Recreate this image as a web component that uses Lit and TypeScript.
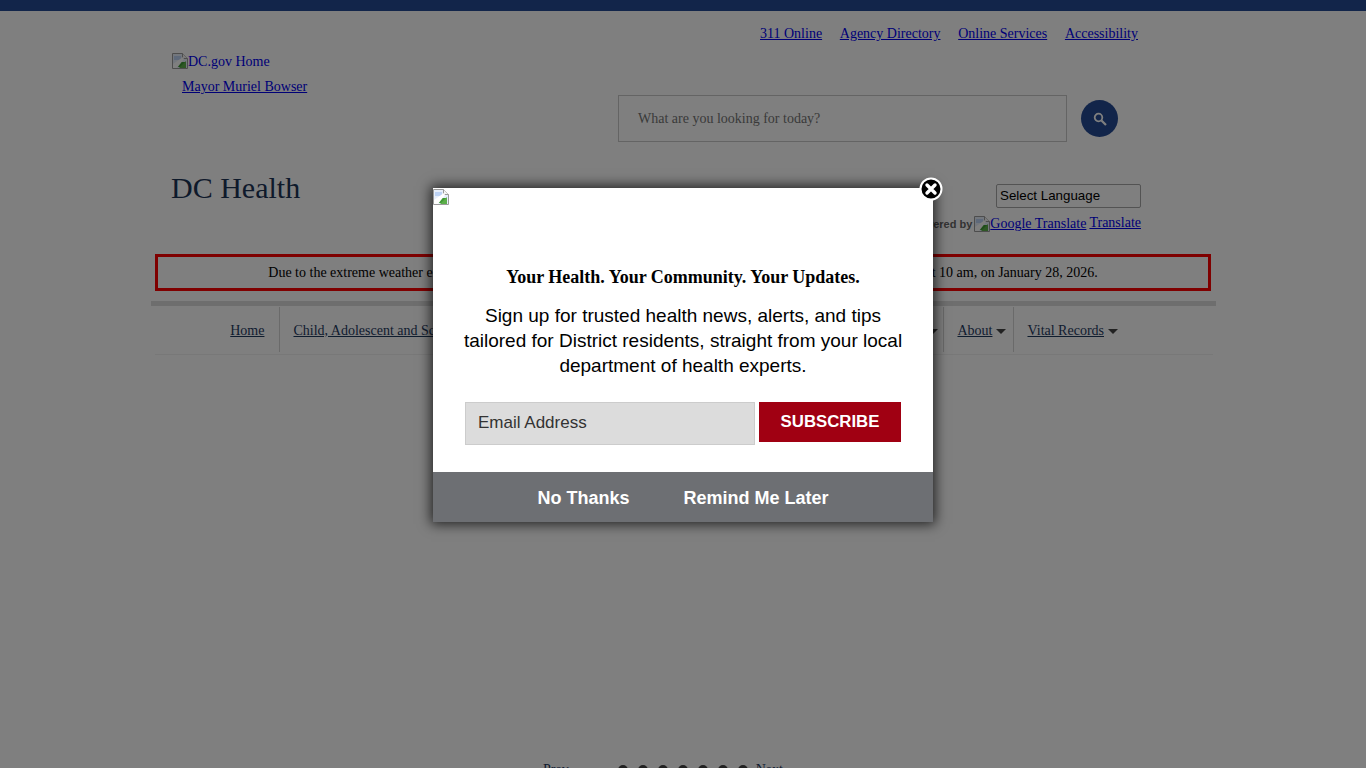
import { LitElement, html, css, svg } from "lit";
import { customElement } from "lit/decorators.js";

const broken = svg`<svg class="broken" width="16" height="16" viewBox="0 0 16 16"><path d="M.5.5h10l5 5v10H.5z" fill="#e6eefb" stroke="#9a9a9a"/><path d="M10.5.5v5h5" fill="#f4f4f4" stroke="#9a9a9a"/><path d="M2 3h7v4H2z" fill="#bcd2f5"/><path d="M2 14 8 9h6v5z" fill="#3f9a35"/><path d="M1 11 11 4l1 2L5 15H1z" fill="#fff"/><path d="M7 15l7-7v7z" fill="#5cae4a"/></svg>`;

@customElement("app-root")
export class AppRoot extends LitElement {
  static styles = css`
    :host { display: block; position: relative; height: 768px; overflow: hidden; background: #fff;
      font: 14px/16px "Liberation Serif", serif; color: #000; }
    a { color: #0000ee; text-decoration: underline; }
    .top { height: 11px; background: #254b94; }
    .page { width: 1065px; margin-left: 151px; }
    .util { display: flex; justify-content: flex-end; gap: 17.7px; padding: 15px 78px 0 0; }
    .masthead { display: grid; grid-template-columns: 467px 1fr; height: 128px; }
    .logo { padding: 11px 0 0 21px; display: flex; flex-direction: column; }
    .home { display: flex; height: 18px; align-items: flex-start; color: #0000ee; }
    .home a { text-decoration: none; line-height: 18px; }
    .broken { flex: none; display: block; }
    .mayor { margin: 8px 0 0 10px; }
    .search { display: flex; align-items: center; gap: 14px; padding-top: 53px; align-self: start; }
    .box { width: 449px; height: 47px; box-sizing: border-box; border: 1px solid #c8c8c8; display: flex; align-items: center;
      padding-left: 19px; color: #757575; }
    .go { width: 37px; height: 37px; border-radius: 50%; background: #254b94; display: grid; place-items: center; }
    .brand { display: flex; justify-content: space-between; height: 84px; padding: 0 75px 0 20px; }
    h1 { margin: 0; font: 400 30px/36px "Liberation Serif", serif; color: #1d3557; }
    .lang { display: flex; flex-direction: column; align-items: flex-end; padding-top: 14px; }
    .select { width: 145px; height: 24px; box-sizing: border-box; border: 1px solid #a6a6a6; border-radius: 2px;
      font: 13.33px/22px "Liberation Sans", sans-serif; padding-left: 3px; color: #000; }
    .powered { display: flex; align-items: center; gap: 2px; margin-top: 7px; height: 18px; color: #666;
      font: 700 11px/16px "Liberation Sans", sans-serif; white-space: nowrap; }
    .powered a { font: 14px/16px "Liberation Serif", serif; }
    .powered .g { display: flex; }
    .powered .t { margin-left: 1px; position: relative; top: -1px; }
    .alert { margin: 0 5px 0 4px; height: 37px; box-sizing: border-box; border: 3px solid #ff0000; display: flex;
      align-items: center; justify-content: center; white-space: nowrap; }
    .rule { height: 5px; background: #dcdcdc; margin-top: 10px; }
    nav { display: flex; justify-content: flex-end; height: 49px; margin: 0 3px 0 4px; border-bottom: 1px solid #f0f0f0; padding: 1px 95px 0 0; box-sizing: border-box; }
    nav .item { display: flex; align-items: center; box-sizing: border-box; padding: 2px 7px 0 13px; border-right: 1px solid #d4d4d4; height: 45px; color: #1f3a5f; white-space: nowrap; gap: 4px; }
    nav .item:last-child { border-right: 0; padding-right: 0; }
    nav a { color: #1f3a5f; }
    nav .first { flex: 1; justify-content: flex-end; padding-right: 15px; }
    nav .wide { flex: 0 0 664px; overflow: hidden; padding-right: 5px; }
    nav .wide .caret { margin-left: auto; }
    .caret { width: 0; height: 0; border: 5px solid transparent; border-top-color: #444; border-bottom: 0; margin-top: 1px; }
    .pager { position: absolute; left: 543px; top: 762px; display: flex; align-items: flex-start; color: #1f3a5f; }
    .dots { display: flex; gap: 10px; margin: 3px 8px 0 49px; }
    .dots i { width: 10px; height: 10px; border-radius: 50%; background: #444; display: block; }
    .pager a { color: #1f3a5f; }
    .shade { position: absolute; inset: 0; background: rgba(0, 0, 0, 0.5); }
    .modal { position: absolute; left: 433px; top: 188px; width: 500px; height: 334px; background: #fff; box-shadow: 0 0 12px 2px rgba(0,0,0,.75);
      display: flex; flex-direction: column; font-family: "Liberation Sans", sans-serif; }
    .close { position: absolute; left: 486px; top: -11px; display: block; }
    .body { flex: 1; display: flex; flex-direction: column; align-items: center; padding-top: 1px; }
    .body .broken { align-self: flex-start; }
    h2 { margin: 62px 0 0; font: 700 18px/20px "Liberation Serif", serif; color: #000; white-space: nowrap; }
    p { margin: 16px 0 0; font-size: 19px; line-height: 25px; text-align: center; color: #000; }
    .form { display: flex; align-items: flex-start; gap: 4px; align-self: flex-start; margin: 24px 0 0 32px; }
    .email { width: 290px; height: 43px; box-sizing: border-box; background: #dcdcdc; border: 1px solid #ccc; padding-left: 12px;
      font-size: 17px; line-height: 40px; color: #333; }
    .sub { width: 142px; height: 40px; background: #a00012; color: #fff; font-weight: 700; font-size: 16.8px; line-height: 39px; text-align: center; }
    .foot { height: 50px; background: #6d6f73; display: flex; justify-content: center; gap: 54px; color: #fff; font-weight: 700;
      font-size: 18px; line-height: 52px; }
  `;

  render() {
    return html`
      <div class="top"></div>
      <div class="page">
        <div class="util">
          <a href="#">311 Online</a><a href="#">Agency Directory</a><a href="#">Online Services</a><a href="#">Accessibility</a>
        </div>
        <div class="masthead">
          <div class="logo">
            <div class="home">${broken}<a href="#">DC.gov Home</a></div>
            <a class="mayor" href="#">Mayor Muriel Bowser</a>
          </div>
          <div class="search">
            <div class="box">What are you looking for today?</div>
            <div class="go"><svg width="14" height="14" viewBox="0 0 14 14" fill="none" stroke="#fff"><circle cx="5.5" cy="5.5" r="3.8" stroke-width="1.8"/><path d="M8.5 8.5 13 13" stroke-width="2.2"/></svg></div>
          </div>
        </div>
        <div class="brand">
          <h1>DC Health</h1>
          <div class="lang">
            <div class="select">Select Language</div>
            <div class="powered">Powered by <a class="g" href="#">${broken}Google Translate</a><a class="t" href="#">Translate</a></div>
          </div>
        </div>
        <div class="alert">Due to the extreme weather expected in the District, all DC Health offices will be closed this morning, and will open at 10 am, on January 28, 2026.</div>
        <div class="rule"></div>
        <nav>
          <div class="item first"><a href="#">Home</a></div>
          <div class="item wide"><a href="#">Child, Adolescent and School Health</a><span class="caret"></span></div>
          <div class="item"><a href="#">About</a><span class="caret"></span></div>
          <div class="item"><a href="#">Vital Records</a><span class="caret"></span></div>
        </nav>
      </div>
      <div class="pager">
        <a href="#">Prev</a>
        <div class="dots"><i></i><i></i><i></i><i></i><i></i><i></i><i></i></div>
        <a href="#">Next</a>
      </div>
      <div class="shade"></div>
      <div class="modal">
        <div class="body">
          ${broken}
          <h2>Your Health. Your Community. Your Updates.</h2>
          <p>Sign up for trusted health news, alerts, and tips<br />tailored for District residents, straight from your local<br />department of health experts.</p>
          <div class="form">
            <div class="email">Email Address</div>
            <div class="sub">SUBSCRIBE</div>
          </div>
        </div>
        <div class="foot"><span>No Thanks</span><span>Remind Me Later</span></div>
        <svg class="close" width="24" height="24" viewBox="0 0 24 24"><circle cx="12" cy="12" r="10.5" fill="#000" stroke="#fff" stroke-width="2"/><path d="M8 8l8 8M16 8l-8 8" stroke="#fff" stroke-width="3.4" stroke-linecap="round"/></svg>
      </div>
    `;
  }
}
